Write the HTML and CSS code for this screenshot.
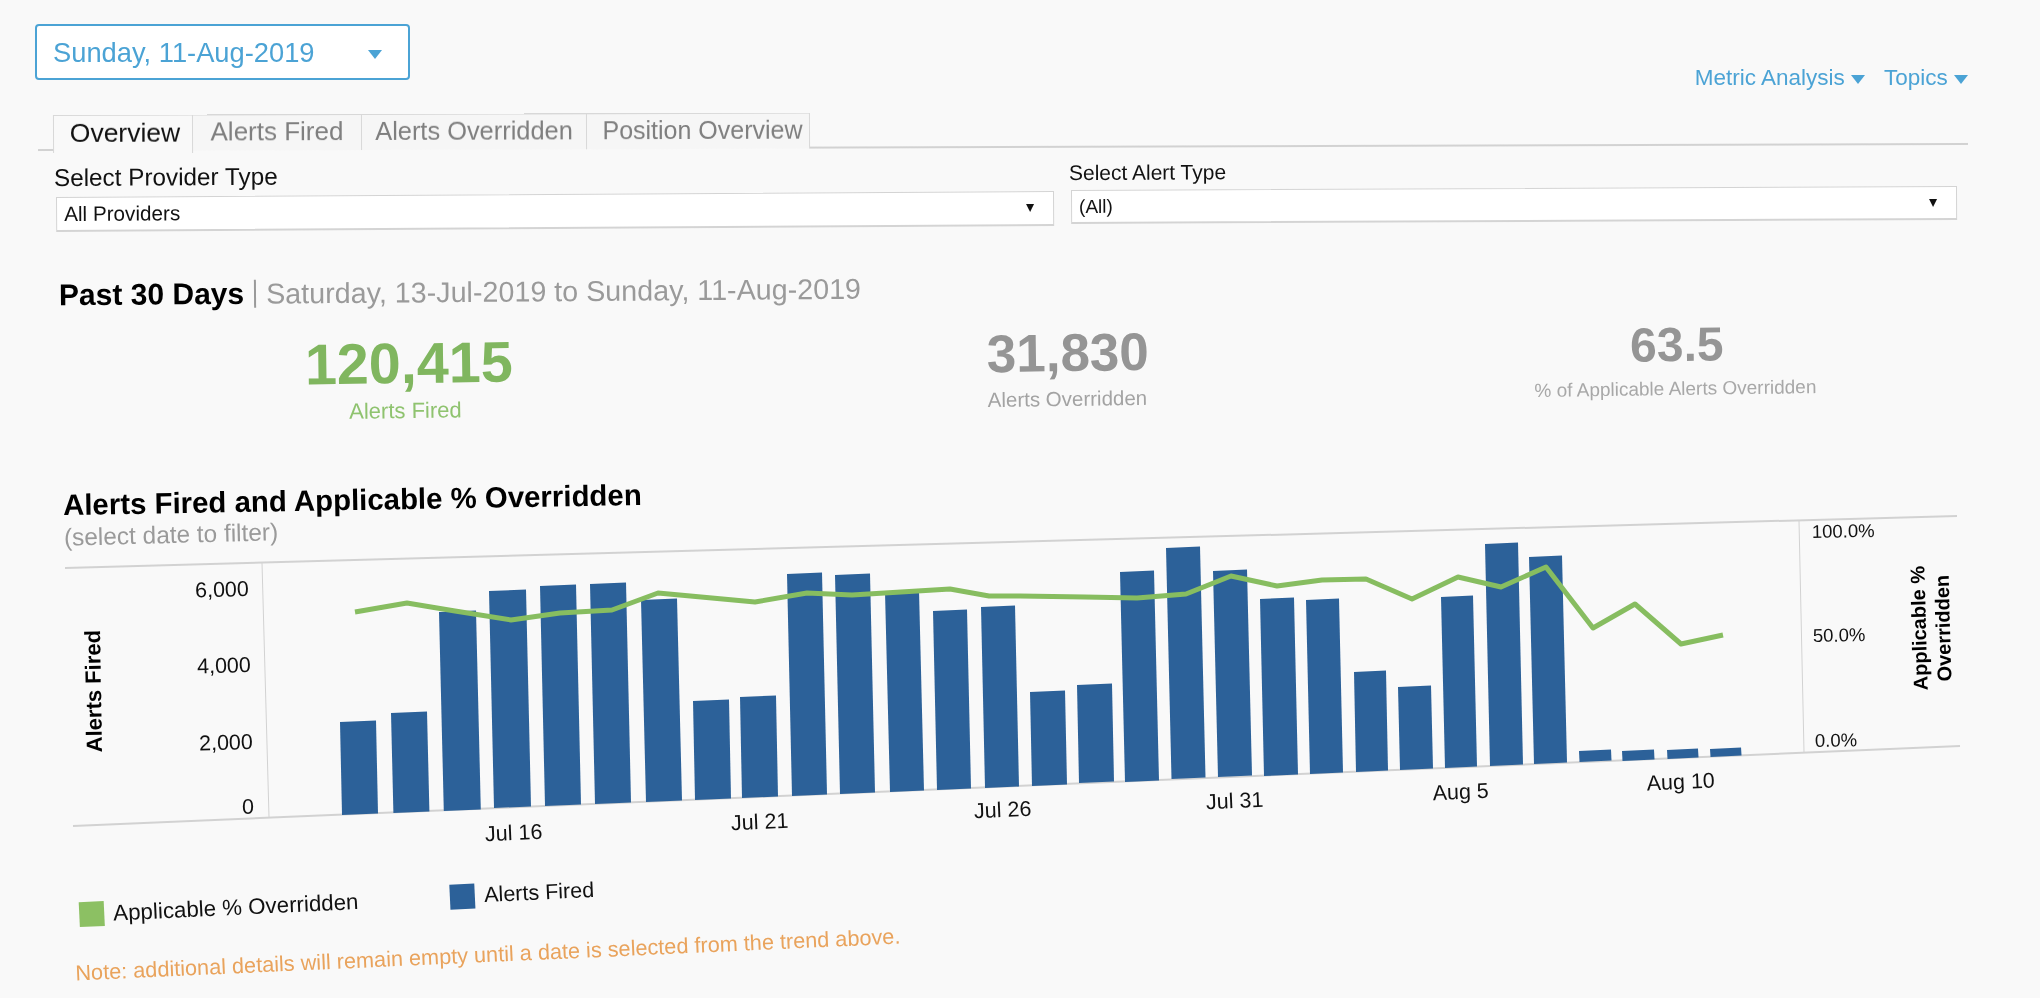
FILE: index.html
```html
<!DOCTYPE html>
<html lang="en">
<head>
    <meta charset="UTF-8">
    <title>Alerts Overview</title>
    <link rel="stylesheet" href="styles.css">
</head>
<body>
    <div class="page">
        <div class="top-bar">
            <div class="date-btn">
                <span>Sunday, 11-Aug-2019</span>
                <i class="caret caret-big"></i>
            </div>
            <div class="top-links">
                <a class="top-link">Metric Analysis <i class="caret"></i></a>
                <a class="top-link">Topics <i class="caret"></i></a>
            </div>
        </div>

        <div class="tabs">
            <div class="tab active">Overview</div>
            <div class="tab tab-fired">Alerts Fired</div>
            <div class="tab tab-over">Alerts Overridden</div>
            <div class="tab tab-pos">Position Overview</div>
        </div>

        <div class="filters">
            <div class="filter filter-provider">
                <label>Select Provider Type</label>
                <div class="select-box"><span>All Providers</span><i class="caret caret-dark"></i></div>
            </div>
            <div class="filter filter-alert">
                <label>Select Alert Type</label>
                <div class="select-box"><span>(All)</span><i class="caret caret-dark"></i></div>
            </div>
        </div>

        <div class="period">
            <strong>Past 30 Days</strong>
            <span class="period-sep"></span>
            <span class="period-range">Saturday, 13-Jul-2019 to Sunday, 11-Aug-2019</span>
        </div>

        <div class="kpis">
            <div class="kpi kpi-fired">
                <div class="kpi-num">120,415</div>
                <div class="kpi-label">Alerts Fired</div>
            </div>
            <div class="kpi kpi-over">
                <div class="kpi-num">31,830</div>
                <div class="kpi-label">Alerts Overridden</div>
            </div>
            <div class="kpi kpi-pct">
                <div class="kpi-num">63.5</div>
                <div class="kpi-label">% of Applicable Alerts Overridden</div>
            </div>
        </div>

        <h2 class="chart-title">Alerts Fired and Applicable % Overridden</h2>
        <div class="chart-sub">(select date to filter)</div>

        <svg class="chart" viewBox="0 510 2040 350" width="2040" height="350">
            <line class="axis" x1="65" y1="568" x2="1957" y2="516"/>
            <line class="axis" x1="73" y1="826" x2="1960" y2="746"/>
            <line class="axis thin" x1="262" y1="563" x2="269" y2="817"/>
            <line class="axis thin" x1="1799" y1="521" x2="1804" y2="752"/>

            <g class="bars">
                <polygon points="340,722 376,720.5 378,813.5 342,815"/>
                <polygon points="391,713 427,711.5 429.4,811.5 393.4,813"/>
                <polygon points="439,612 476,610.5 480.8,809.5 443.8,811"/>
                <polygon points="489,591 526,589.5 531,806.5 494,808"/>
                <polygon points="540,586 576,584.5 581,804.5 545,806"/>
                <polygon points="590,584 626,582.5 631,802.5 595,804"/>
                <polygon points="641,600 677,598.5 682,800.5 646,802"/>
                <polygon points="693,701 729,699.5 731,798.5 695,800"/>
                <polygon points="740,697 776,695.5 778,796.5 742,798"/>
                <polygon points="787,574 822,572.5 827,794.5 792,796"/>
                <polygon points="835,575 870,573.5 875,792.5 840,794"/>
                <polygon points="885,592 919,590.5 924,790.5 890,792"/>
                <polygon points="933,611 967,609.5 971,788.5 937,790"/>
                <polygon points="981,607 1015,605.5 1019,786.5 985,788"/>
                <polygon points="1030,692 1065,690.5 1067,784.5 1032,786"/>
                <polygon points="1077,685 1112,683.5 1114,781.5 1079,783"/>
                <polygon points="1120,572 1154,570.5 1159,780.5 1125,782"/>
                <polygon points="1166,548 1200,546.5 1205.5,777.5 1171.5,779"/>
                <polygon points="1213,571 1247,569.5 1252,775.5 1218,777"/>
                <polygon points="1260,599 1294,597.5 1298,774.5 1264,776"/>
                <polygon points="1306,600 1339,598.5 1343,772.5 1310,774"/>
                <polygon points="1354,672 1386,670.5 1388,770.5 1356,772"/>
                <polygon points="1398,687 1431,685.5 1433,768.5 1400,770"/>
                <polygon points="1441,597 1473,595.5 1477,766.5 1445,768"/>
                <polygon points="1485,544 1518,542.5 1523,764.5 1490,766"/>
                <polygon points="1529,557 1562,555.5 1567,762.5 1534,764"/>
                <polygon points="1579,751 1611,749.5 1611.5,760.5 1579.5,762"/>
                <polygon points="1622,751 1654,749.5 1654.5,759.5 1622.5,761"/>
                <polygon points="1667,750 1698,748.5 1698.5,757.5 1667.5,759"/>
                <polygon points="1710,749 1741,747.5 1741.5,755.5 1710.5,757"/>
            </g>

            <polyline class="trend" points="355,612 407,603 455,611 511,620 560,613 612,610 658,593 755,602 807,593 852,595 950,589 989,596 1020,596 1085,597 1137,598 1186,594 1231,576 1277,586 1322,580 1366,579 1412,599 1458,577 1501,587 1546,567 1593,628 1635,604 1681,644 1723,635"/>

            <g class="tick">
                <text x="249" y="596" text-anchor="end" transform="rotate(-1.5 249 596)">6,000</text>
                <text x="251" y="672" text-anchor="end" transform="rotate(-1.5 251 672)">4,000</text>
                <text x="253" y="749" text-anchor="end" transform="rotate(-1.5 253 749)">2,000</text>
                <text x="254" y="814" text-anchor="end">0</text>
            </g>
            <g class="tick">
                <text x="514" y="840" text-anchor="middle" transform="rotate(-2.4 514 840)">Jul 16</text>
                <text x="760" y="829" text-anchor="middle" transform="rotate(-2.4 760 829)">Jul 21</text>
                <text x="1003" y="817" text-anchor="middle" transform="rotate(-2.4 1003 817)">Jul 26</text>
                <text x="1235" y="808" text-anchor="middle" transform="rotate(-2.4 1235 808)">Jul 31</text>
                <text x="1461" y="799" text-anchor="middle" transform="rotate(-2.4 1461 799)">Aug 5</text>
                <text x="1681" y="789" text-anchor="middle" transform="rotate(-2.4 1681 789)">Aug 10</text>
            </g>
            <g class="tick tick-small">
                <text x="1812" y="538" transform="rotate(-1 1812 538)">100.0%</text>
                <text x="1813" y="642" transform="rotate(-1 1813 642)">50.0%</text>
                <text x="1815" y="747" transform="rotate(-1 1815 747)">0.0%</text>
            </g>

            <text class="axis-title" x="101" y="691" text-anchor="middle" transform="rotate(-91 101 691)">Alerts Fired</text>
            <text class="axis-title small" x="1926" y="628" text-anchor="middle" transform="rotate(-91.5 1926 628)">Applicable %</text>
            <text class="axis-title small" x="1950" y="628" text-anchor="middle" transform="rotate(-91.5 1950 628)">Overridden</text>
        </svg>

        <div class="legend">
            <i class="swatch swatch-green"></i>
            <span class="legend-text legend-first">Applicable % Overridden</span>
            <i class="swatch swatch-blue"></i>
            <span class="legend-text legend-second">Alerts Fired</span>
        </div>

        <div class="note">Note: additional details will remain empty until a date is selected from the trend above.</div>
    </div>
</body>
</html>
```

FILE: styles.css
```css
body {
    margin: 0;
    background-color: #F9F9F9;
    color: #111111;
    font-family: 'Liberation Sans', Arial, sans-serif;
}

.page {
    width: 2040px;
    height: 998px;
    padding-top: 24px;
    box-sizing: border-box;
    overflow: hidden;
    filter: blur(0.4px);
}

.caret {
    display: inline-block;
    width: 0;
    height: 0;
    border-left: 7px solid transparent;
    border-right: 7px solid transparent;
    border-top: 9px solid #4BA3D5;
    vertical-align: middle;
}

.caret-big {
    border-left-width: 7px;
    border-right-width: 7px;
    margin-top: 3px;
}

.caret-dark {
    border-left-width: 4px;
    border-right-width: 4px;
    border-top: 8px solid #111111;
}

/* top bar */
.top-bar {
    display: flex;
    justify-content: space-between;
    align-items: flex-end;
    padding: 0 72px 0 35px;
}

.date-btn {
    display: flex;
    align-items: center;
    justify-content: space-between;
    width: 375px;
    height: 56px;
    padding: 2px 26px 0 16px;
    box-sizing: border-box;
    background-color: #FFFFFF;
    border: 2px solid #4BA3D5;
    border-radius: 4px;
    color: #4BA3D5;
    font-size: 27.3px;
}

.top-links {
    display: flex;
    gap: 19px;
    margin-bottom: -12px;
    font-size: 22.5px;
    line-height: 28px;
}

.top-link {
    color: #4BA3D5;
    white-space: nowrap;
}

/* tabs */
.tabs {
    display: flex;
    width: 1930px;
    height: 36px;
    margin: 32px 0 0 38px;
    padding-left: 15px;
    box-sizing: border-box;
    border-bottom: 2px solid #D2D2D2;
    transform: rotate(-0.18deg);
    font-size: 26px;
    color: #7F7F7F;
}

.tab {
    display: flex;
    align-items: center;
    justify-content: center;
    height: 36px;
    padding-bottom: 3px;
    box-sizing: border-box;
    background-color: #F6F6F6;
    border: 1px solid #D8D8D8;
    border-left: none;
    border-bottom: none;
}

.tab.active {
    width: 140px;
    height: 38px;
    padding-left: 4px;
    background-color: #F9F9F9;
    border-left: 1px solid #D8D8D8;
    font-size: 26.5px;
    color: #111111;
}

.tab-fired { width: 169px; }
.tab-over { width: 225px; font-size: 25.4px; }
.tab-pos { width: 223px; padding-left: 9px; font-size: 25px; }

/* filters */
.filters {
    display: flex;
    align-items: flex-start;
    gap: 17px;
    margin: 14px 0 0 56px;
}

.filter label {
    display: block;
    line-height: 26px;
    white-space: nowrap;
}

.filter-provider {
    width: 998px;
    transform: rotate(-0.35deg);
}

.filter-provider label {
    margin: 0 0 6px -2px;
    font-size: 24.3px;
}

.filter-alert {
    width: 886px;
    margin-top: -4px;
    transform: rotate(-0.26deg);
}

.filter-alert label {
    margin-bottom: 4px;
    margin-left: -2px;
    font-size: 21px;
}

.select-box {
    display: flex;
    align-items: center;
    justify-content: space-between;
    height: 35px;
    padding: 0 19px 0 7px;
    box-sizing: border-box;
    background-color: #FFFFFF;
    border: 1px solid #D4D4D4;
    border-bottom-width: 2px;
    font-size: 20.7px;
}

.filter-alert .select-box {
    height: 34px;
    font-size: 19px;
}

/* period heading */
.period {
    display: flex;
    align-items: center;
    width: fit-content;
    height: 36px;
    margin: 45px 0 0 59px;
    transform: rotate(-0.47deg);
    font-size: 28.7px;
    color: #9A9A9A;
    white-space: nowrap;
}

.period strong {
    color: #000000;
    font-size: 30px;
}

.period-sep {
    width: 2px;
    height: 28px;
    margin: 0 10px;
    background-color: #9A9A9A;
}

/* big numbers */
.kpis {
    display: grid;
    grid-template-columns: 818px 500px 718px;
    align-items: start;
    margin-top: 9px;
    text-align: center;
}

.kpi-num {
    font-weight: 700;
}

.kpi-label {
    margin-top: 6px;
    line-height: 26px;
}

.kpi-fired {
    margin-top: 14px;
    transform: rotate(-0.8deg);
    color: #80B65F;
}

.kpi-fired .kpi-num {
    font-size: 57.5px;
    line-height: 60px;
}

.kpi-fired .kpi-label {
    margin-top: 5px;
    padding-right: 8px;
    font-size: 22px;
    color: #8FC36F;
}

.kpi-over {
    margin-top: 7px;
    transform: rotate(-0.8deg);
    color: #959595;
}

.kpi-over .kpi-num {
    font-size: 53px;
    line-height: 54px;
}

.kpi-over .kpi-label {
    padding-right: 2px;
    font-size: 20.5px;
    color: #A3A3A3;
}

.kpi-pct {
    margin-top: 1px;
    transform: rotate(-0.8deg);
    color: #959595;
}

.kpi-pct .kpi-num {
    font-size: 48px;
    line-height: 50px;
}

.kpi-pct .kpi-label {
    padding-right: 4px;
    font-size: 19px;
    color: #A8A8A8;
}

/* chart */
.chart-title {
    width: fit-content;
    margin: 59px 0 0 63px;
    font-size: 29.4px;
    line-height: 34px;
    font-weight: 700;
    color: #000000;
    transform: rotate(-1deg);
    white-space: nowrap;
}

.chart-sub {
    width: fit-content;
    margin: 5px 0 0 64px;
    font-size: 24.4px;
    line-height: 26px;
    color: #9A9A9A;
    transform: rotate(-1.5deg);
}

.chart {
    display: block;
    margin-top: -38px;
}

.axis {
    stroke: #D2D2D2;
    stroke-width: 2;
}

.axis.thin {
    stroke-width: 1;
}

.bars polygon {
    fill: #2C6199;
}

.trend {
    fill: none;
    stroke: #87BD60;
    stroke-width: 5;
    stroke-linejoin: round;
}

.tick text {
    font-size: 21.5px;
    fill: #111111;
}

.tick-small text {
    font-size: 18.5px;
}

.axis-title {
    font-size: 22px;
    font-weight: 700;
    fill: #000000;
}

.axis-title.small {
    font-size: 20px;
}

/* legend and footnote */
.legend {
    display: flex;
    align-items: center;
    width: fit-content;
    height: 25px;
    margin: 30px 0 0 79px;
    transform: rotate(-2.7deg);
    font-size: 22.3px;
    white-space: nowrap;
}

.swatch {
    width: 25px;
    height: 25px;
    margin-right: 9px;
}

.swatch-green { background-color: #8CC063; }
.swatch-blue { background-color: #2C6199; }

.legend-first {
    margin-right: 92px;
}

.legend-second {
    font-size: 21.5px;
}

.note {
    width: fit-content;
    margin: 27px 0 0 75px;
    font-size: 21.7px;
    line-height: 26px;
    color: #E9A35C;
    transform: rotate(-2.56deg);
    white-space: nowrap;
}
```
